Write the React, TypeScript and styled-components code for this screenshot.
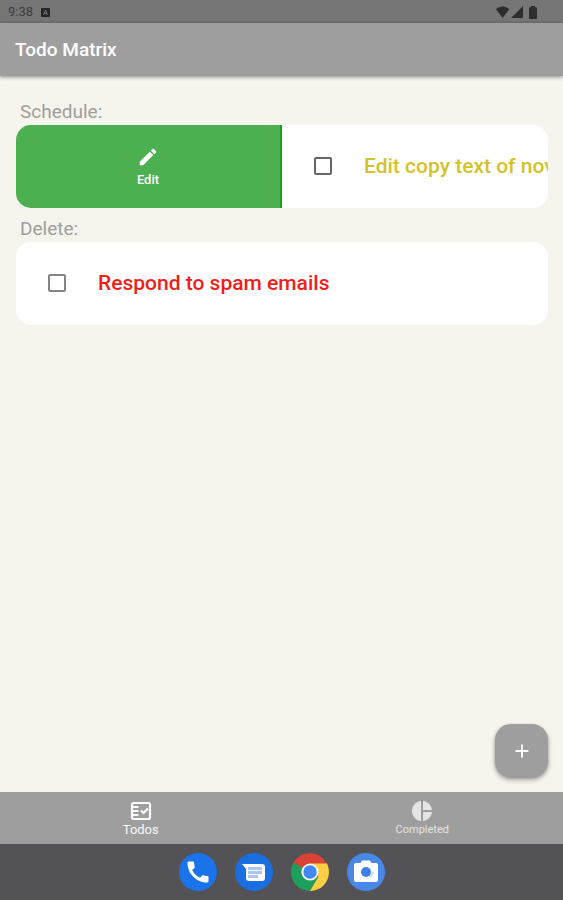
import React, { useState } from "react";
import styled, { createGlobalStyle } from "styled-components";
import { MdAdd, MdCall, MdEdit, MdPieChart } from "react-icons/md";

const GlobalStyle = createGlobalStyle`
  *, *::before, *::after { box-sizing: border-box; }
  body { margin: 0; font-family: Roboto, "Liberation Sans", sans-serif; }
  button, input { font: inherit; }
`;

const Screen = styled.div`
  display: flex;
  flex-direction: column;
  min-height: 100vh;
  background: #f5f4ed;
`;

const StatusBar = styled.div`
  display: flex;
  align-items: center;
  height: 23px;
  padding: 1px 25px 0 8px;
  background: #767676;
  color: #3c3c3c;
  font-size: 13px;
  line-height: 16px;
`;

const Clock = styled.time`
  margin-right: 8px;
`;

const StatusIcons = styled.div`
  display: flex;
  align-items: center;
  margin-left: auto;
`;

const AppBar = styled.header`
  display: flex;
  align-items: center;
  height: 53px;
  padding: 0 15px;
  background: #9e9e9e;
  box-shadow: 0 1px 4px rgba(0, 0, 0, 0.45);
  z-index: 1;
`;

const Title = styled.h1`
  margin: 0;
  color: #fff;
  font-size: 19px;
  font-weight: 500;
  line-height: 24px;
`;

const Main = styled.main`
  display: flex;
  flex: 1;
  flex-direction: column;
  padding: 15px;
`;

const SectionLabel = styled.h2`
  margin: 0;
  padding: 10px 5px 2px;
  color: #9e9e9e;
  font-size: 19px;
  font-weight: 400;
  line-height: 22px;
`;

const Card = styled.div`
  display: flex;
  height: 83px;
  margin-left: 1px;
  overflow: hidden;
  border-radius: 15px;
  background: #fff;
`;

const EditAction = styled.button`
  display: flex;
  flex: 0 0 50%;
  flex-direction: column;
  align-items: center;
  justify-content: center;
  gap: 3px;
  padding: 2px 0 0;
  border: 0;
  border-right: 2px solid #16a01e;
  background: #4caf50;
  color: #fff;
  font-size: 13px;
  font-weight: 500;
  line-height: 18px;
  cursor: pointer;
`;

const Task = styled.label<{ $color: string }>`
  display: flex;
  flex: 0 0 100%;
  align-items: center;
  gap: 32px;
  padding: 0 32px 1px;
  color: ${(p) => p.$color};
  font-size: 21px;
  font-weight: 500;
  line-height: 24px;
  white-space: nowrap;
  cursor: pointer;
`;

const CheckBox = styled.input<{ $outline: string }>`
  flex: none;
  appearance: none;
  width: 18px;
  height: 18px;
  margin: 0;
  border: 2px solid ${(p) => p.$outline};
  border-radius: 2px;

  &:checked {
    background: ${(p) => p.$outline};
  }
`;

const AddButton = styled.button`
  display: grid;
  place-items: center;
  align-self: flex-end;
  width: 53px;
  height: 53px;
  margin-top: auto;
  padding: 0;
  border: 0;
  border-radius: 16px;
  background: #9e9e9e;
  color: #fff;
  box-shadow: 0 3px 5px rgba(0, 0, 0, 0.3), 0 1px 3px rgba(0, 0, 0, 0.2);
  cursor: pointer;
`;

const BottomNav = styled.nav`
  display: grid;
  grid-template-columns: 1fr 1fr;
  height: 52px;
  background: #9e9e9e;
`;

const NavItem = styled.a<{ $active?: boolean }>`
  display: flex;
  flex-direction: column;
  align-items: center;
  padding-top: 7px;
  color: ${(p) => (p.$active ? "#fafafa" : "#e4e4e4")};
  font-size: ${(p) => (p.$active ? 13 : 11)}px;
  line-height: 14px;
  text-decoration: none;
`;

const Dock = styled.nav`
  display: flex;
  justify-content: center;
  align-items: center;
  gap: 18px;
  height: 56px;
  background: #535357;
`;

const DockApp = styled.button<{ $color: string }>`
  display: grid;
  place-items: center;
  width: 38px;
  height: 38px;
  padding: 0;
  border: 0;
  border-radius: 50%;
  background: ${(p) => p.$color};
  color: #fff;
  cursor: pointer;
`;

const KeyboardBadge = () => (
  <svg width="9" height="9" viewBox="0 0 9 9" aria-hidden="true">
    <rect width="9" height="9" rx="1" fill="#252525" />
    <path d="M2.5 7L4.5 2.2L6.5 7M3.3 5.4H5.7" fill="none" stroke="#767676" />
  </svg>
);

const SystemIcons = () => (
  <svg width="42" height="13" viewBox="0 0 42 13" fill="#2d2d2d" aria-hidden="true">
    <path d="M0 3.3C3.8-.4 9.4-.4 13.2 3.3L6.6 12Z" />
    <path d="M15 12L27 0V12Z" />
    <path d="M35 0H39V1.2H40Q41 1.2 41 2.2V12Q41 13 40 13H34Q33 13 33 12V2.2Q33 1.2 34 1.2H35Z" />
  </svg>
);

const TodoListIcon = () => (
  <svg width="24" height="24" viewBox="0 0 24 24" fill="none" stroke="currentColor" aria-hidden="true">
    <rect x="3" y="4" width="18" height="16" rx="1.5" strokeWidth="2.2" />
    <path d="M4 8H9.5M4 12H9.5M4 16H9.5" strokeWidth="2" />
    <path d="M12 11.5L14.5 14L19 9.5" strokeWidth="2.2" />
  </svg>
);

const MessagesIcon = () => (
  <svg width="38" height="38" viewBox="0 0 38 38" aria-hidden="true">
    <path
      d="M7 11H27Q30 11 30 14V25Q30 28 27 28H14Q11 28 11 25V16Z"
      fill="#fff"
    />
    <path d="M13 15.5H27M13 19.5H27M13 23.5H23" stroke="#a9c6f5" strokeWidth="3" />
  </svg>
);

const ChromeIcon = () => (
  <svg width="38" height="38" viewBox="0 0 38 38" aria-hidden="true">
    <path d="M2.6 9.5A19 19 0 0 0 19 38L27.2 23.8L19 19L10.8 23.8Z" fill="#1da05c" />
    <path d="M35.4 9.5A19 19 0 0 1 19 38L27.3 23.7L19 10H35.6Z" fill="#fdce44" />
    <path d="M2.6 9.5A19 19 0 0 1 35.6 10.4H19L10.8 23.8Z" fill="#d94235" />
    <path d="M2.6 9.5L10.8 23.8L19 19Z" fill="#1da05c" />
    <circle cx="19" cy="19" r="8.6" fill="#f4f5f7" />
    <circle cx="19" cy="19" r="6.7" fill="#4285f4" />
  </svg>
);

const CameraIcon = () => (
  <svg width="38" height="38" viewBox="0 0 38 38" aria-hidden="true">
    <path
      d="M13.5 10L15 7.5H23L24.5 10H29Q31 10 31 12V27Q31 29 29 29H9Q7 29 7 27V12Q7 10 9 10Z"
      fill="#fff"
    />
    <path d="M22 24Q25.5 23 26 19" fill="none" stroke="#cddcf6" strokeWidth="2" />
    <circle cx="19" cy="19" r="5" fill="#3f80e8" />
  </svg>
);

interface TodoProps {
  text: string;
  color: string;
  outline: string;
}

function Todo({ text, color, outline }: TodoProps) {
  const [done, setDone] = useState(false);
  return (
    <Task $color={color}>
      <CheckBox
        type="checkbox"
        $outline={outline}
        checked={done}
        onChange={(e) => setDone(e.target.checked)}
      />
      {text}
    </Task>
  );
}

export default function App() {
  return (
    <Screen>
      <GlobalStyle />
      <StatusBar>
        <Clock>9:38</Clock>
        <KeyboardBadge />
        <StatusIcons>
          <SystemIcons />
        </StatusIcons>
      </StatusBar>
      <AppBar>
        <Title>Todo Matrix</Title>
      </AppBar>
      <Main>
        <SectionLabel>Schedule:</SectionLabel>
        <Card>
          <EditAction type="button">
            <MdEdit size={22} aria-hidden="true" />
            Edit
          </EditAction>
          <Todo text="Edit copy text of novel" color="#d4c22a" outline="#666" />
        </Card>
        <SectionLabel>Delete:</SectionLabel>
        <Card>
          <Todo text="Respond to spam emails" color="#f01d18" outline="#858585" />
        </Card>
        <AddButton type="button" aria-label="Add todo">
          <MdAdd size={22} aria-hidden="true" />
        </AddButton>
      </Main>
      <BottomNav>
        <NavItem href="#todos" $active aria-current="page">
          <TodoListIcon />
          Todos
        </NavItem>
        <NavItem href="#completed">
          <MdPieChart size={24} aria-hidden="true" />
          Completed
        </NavItem>
      </BottomNav>
      <Dock aria-label="Apps">
        <DockApp type="button" $color="#1a73e8" aria-label="Phone">
          <MdCall size={28} aria-hidden="true" />
        </DockApp>
        <DockApp type="button" $color="#1a6fe0" aria-label="Messages">
          <MessagesIcon />
        </DockApp>
        <DockApp type="button" $color="transparent" aria-label="Chrome">
          <ChromeIcon />
        </DockApp>
        <DockApp type="button" $color="#4a88e8" aria-label="Camera">
          <CameraIcon />
        </DockApp>
      </Dock>
    </Screen>
  );
}
